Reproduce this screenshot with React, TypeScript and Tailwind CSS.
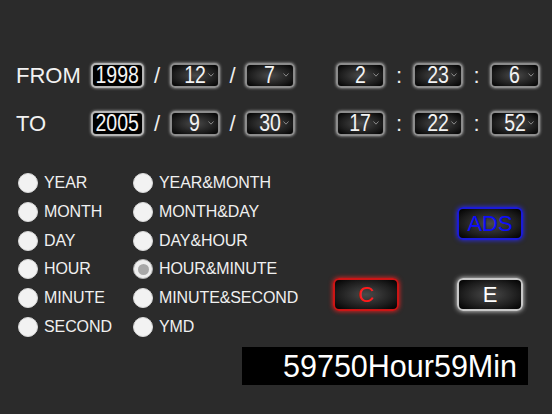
import React from "react";

const Chev = () => (
  <svg className="absolute right-[4px] top-[8px]" width="6" height="4" viewBox="0 0 6 4">
    <path d="M0.5 0.5 L3 3.2 L5.5 0.5" fill="none" stroke="#8a8a8a" strokeWidth="1" />
  </svg>
);

function Box({ v, w, plain }: { v: string; w: string; plain?: boolean }) {
  return (
    <div
      className={`relative ${w} h-[25px] rounded-[5px] flex items-center justify-center ${
        plain
          ? "bg-black border-2 border-[#b5b5b5] shadow-[0_0_3px_#cfcfcf]"
          : "bg-[radial-gradient(ellipse_at_center,#4a4a4a_0%,#1c1c1c_65%,#000_100%)] border-2 border-[#8c8c8c] shadow-[0_0_3px_#bdbdbd]"
      }`}
    >
      <span className="inline-block text-[23.5px] leading-none scale-x-[0.83] text-[#f4f4f4]">{v}</span>
      {!plain && <Chev />}
    </div>
  );
}

function Sep({ c, w }: { c: string; w: string }) {
  return <div className={`${w} text-center text-[22px] leading-none text-[#eee]`}>{c}</div>;
}

function DateRow({ label, d, t }: { label: string; d: string[]; t: string[] }) {
  return (
    <div className="flex items-center h-[25px]">
      <div className="w-[91px] pl-[16px] text-[22px] leading-none text-[#f2f2f2]">{label}</div>
      <Box v={d[0]} w="w-[53px]" plain />
      <Sep c="/" w="w-[26px]" />
      <Box v={d[1]} w="w-[50px]" />
      <Sep c="/" w="w-[25px]" />
      <Box v={d[2]} w="w-[50px]" />
      <div className="w-[41px]" />
      <Box v={t[0]} w="w-[49px]" />
      <Sep c=":" w="w-[28px]" />
      <Box v={t[1]} w="w-[50px]" />
      <Sep c=":" w="w-[27px]" />
      <Box v={t[2]} w="w-[50px]" />
    </div>
  );
}

function Radio({ label, sel }: { label: string; sel?: boolean }) {
  return (
    <div className="flex items-center h-[28.67px]">
      <div
        className={`w-[20px] h-[20px] rounded-full flex items-center justify-center ${
          sel ? "bg-[#efefef] border border-[#b0b0b0]" : "bg-[#f2f2f2] border border-[#d8d8d8]"
        }`}
      >
        {sel && <div className="w-[11px] h-[11px] rounded-full bg-[#a8a8a8]" />}
      </div>
      <span className="ml-[6px] text-[16px] leading-none text-[#f0f0f0] tracking-[-0.1px]">{label}</span>
    </div>
  );
}

function Btn({ label, kind }: { label: string; kind: "blue" | "red" | "white" }) {
  const cls =
    kind === "blue"
      ? "border-[#1b1bd8] shadow-[0_0_5px_#2a2aff] text-[#0d0dff]"
      : kind === "red"
      ? "border-[#cc1515] shadow-[0_0_5px_#ff2020] text-[#ff1a1a]"
      : "border-[#c8c8c8] shadow-[0_0_5px_#e8e8e8] text-white";
  return (
    <div
      className={`w-[66px] h-[33px] rounded-[6px] border-2 flex items-center justify-center bg-[radial-gradient(ellipse_at_center,#4a4a4a_0%,#1c1c1c_65%,#000_100%)] text-[22px] leading-none ${cls}`}
    >
      {label}
    </div>
  );
}

export default function App() {
  return (
    <div className="w-[552px] h-[414px] bg-[#2b2b2b] overflow-hidden font-['Liberation_Sans',Arial,sans-serif]">
      <div className="pt-[63px]">
        <DateRow label="FROM" d={["1998", "12", "7"]} t={["2", "23", "6"]} />
        <div className="h-[23px]" />
        <DateRow label="TO" d={["2005", "9", "30"]} t={["17", "22", "52"]} />
      </div>
      <div className="mt-[33px] flex">
        <div className="pl-[18px] w-[133px]">
          <Radio label="YEAR" />
          <Radio label="MONTH" />
          <Radio label="DAY" />
          <Radio label="HOUR" />
          <Radio label="MINUTE" />
          <Radio label="SECOND" />
        </div>
        <div className="w-[167px]">
          <Radio label="YEAR&MONTH" />
          <Radio label="MONTH&DAY" />
          <Radio label="DAY&HOUR" />
          <Radio label="HOUR&MINUTE" sel />
          <Radio label="MINUTE&SECOND" />
          <Radio label="YMD" />
        </div>
        <div className="flex-1 flex flex-col">
          <div className="mt-[38px] ml-[157px]">
            <Btn label="ADS" kind="blue" />
          </div>
          <div className="mt-[38px] flex">
            <div className="ml-[33px]">
              <Btn label="C" kind="red" />
            </div>
            <div className="ml-[58px]">
              <Btn label="E" kind="white" />
            </div>
          </div>
        </div>
      </div>
      <div className="mt-[6px] ml-[242px] w-[286px] h-[38px] bg-black flex items-center justify-end pr-[11px]">
        <span className="text-[30.5px] leading-none text-white">59750Hour59Min</span>
      </div>
    </div>
  );
}
